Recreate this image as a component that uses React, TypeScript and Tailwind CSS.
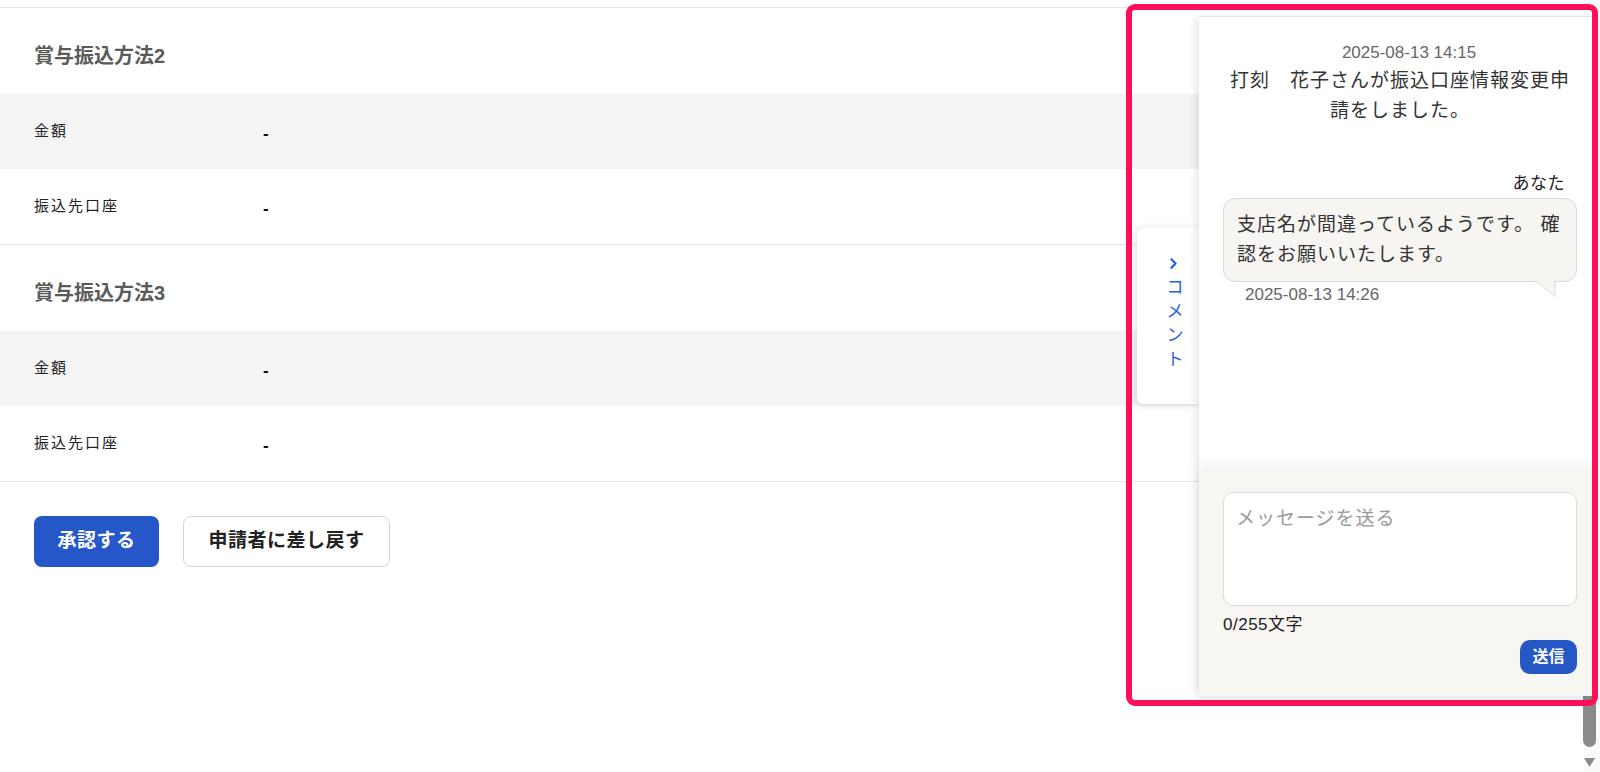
import React from 'react';
import { ChevronRight } from 'lucide-react';

const FONT = { fontFamily: '"Liberation Sans", "Noto Sans CJK JP", sans-serif' };

const Row: React.FC<{ label: string; gray?: boolean }> = ({ label, gray }) => (
  <div className={`flex items-center h-[75px] pl-[34px] ${gray ? 'bg-[#f5f4f4]' : 'bg-white'}`}>
    <div className="w-[229px] text-[15px] tracking-[2px] text-[#222]">{label}</div>
    <div className="text-[17px] font-bold text-[#111] mt-[4px]">-</div>
  </div>
);

const Section: React.FC<{ title: string }> = ({ title }) => (
  <section className="border-b border-[#e6e6e6]">
    <h3 className="pl-[34px] pt-[36px] pb-[26px] text-[20px] leading-[24px] font-bold text-[#5a5a5a]">
      {title}
    </h3>
    <Row label="金額" gray />
    <Row label="振込先口座" />
  </section>
);

const CommentPanel: React.FC = () => (
  <>
    {/* collapse tab */}
    <div className="absolute left-[1137px] top-[228px] w-[62px] h-[176px] bg-white rounded-l-[6px] shadow-[-2px_1px_8px_rgba(0,0,0,0.12)] flex flex-col items-center pt-[27px] text-[#1f5fe8]">
      <ChevronRight size={17} strokeWidth={3} className="ml-[10px]" />
      <div className="flex flex-col items-center mt-[4px] text-[17px] leading-[24px] ml-[14px]">
        {'コメント'.split('').map((c, i) => (
          <span key={i}>{c}</span>
        ))}
      </div>
    </div>

    <aside className="absolute left-[1199px] top-[16px] w-[393px] h-[680px] bg-white border-t border-[#e4e4e4] shadow-[-3px_2px_8px_rgba(0,0,0,0.10)] flex flex-col">
      <div className="flex-1 pl-[24px] pr-[15px] pt-[25px]">
        <p className="text-center text-[17px] leading-[22px] text-[#666] pl-[18px]">2025-08-13 14:15</p>
        <p className="mt-[2px] text-center text-[19px] leading-[30px] tracking-[1px] text-[#333]">
          打刻　花子さんが振込口座情報変更申請をしました。
        </p>

        <p className="mt-[46px] pr-[12px] text-right text-[17px] leading-[24px] tracking-[0.5px] text-[#222]">あなた</p>
        <div className="relative mt-[2px] rounded-[12px] border border-[#dedbd4] bg-[#f6f5f1] pl-[13px] pr-[10px] py-[11px] text-[19px] leading-[30px] tracking-[1px] text-[#333]">
          支店名が間違っているようです。 確認をお願いいたします。
          <svg className="absolute right-[20px] -bottom-[17px]" width="21" height="18" viewBox="0 0 21 18">
            <polygon points="0,0 20,16 20,0" fill="#f6f5f1" />
            <polyline points="0.5,0.6 20,16.5 20,0" fill="none" stroke="#dedbd4" strokeWidth="1" />
          </svg>
        </div>
        <p className="mt-[1px] pl-[22px] text-[17px] leading-[24px] text-[#666]">2025-08-13 14:26</p>
      </div>

      <div className="h-[228px] bg-[#f7f6f3] pl-[24px] pr-[15px] pt-[24px] shadow-[0_-5px_12px_rgba(0,0,0,0.05)]">
        <div className="h-[114px] rounded-[10px] border border-[#dcdcdc] bg-white px-[12px] pt-[13px] text-[19px] leading-[26px] tracking-[1px] text-[#9a9a9a]">
          メッセージを送る
        </div>
        <p className="mt-[8px] text-[17px] leading-[22px] tracking-[0.5px] text-[#222]">0/255文字</p>
        <div className="mt-[4px] flex justify-end">
          <button className="w-[57px] h-[34px] rounded-[10px] bg-[#2557c5] text-white text-[16px] font-bold">
            送信
          </button>
        </div>
      </div>
    </aside>
  </>
);

export default function App() {
  return (
    <div style={FONT} className="relative flex h-[772px] w-full overflow-hidden bg-white">
      <main className="flex-1">
        <div className="h-[8px] border-b border-[#e6e6e6]" />
        <Section title="賞与振込方法2" />
        <Section title="賞与振込方法3" />
        <div className="flex gap-[24px] pl-[34px] pt-[34px]">
          <button className="w-[125px] h-[51px] rounded-[8px] bg-[#2657c8] text-white text-[19px] font-bold tracking-[0.5px]">
            承認する
          </button>
          <button className="w-[207px] h-[51px] rounded-[8px] border border-[#d6d6d6] bg-white text-[#222] text-[19px] font-bold tracking-[0.5px]">
            申請者に差し戻す
          </button>
        </div>
      </main>

      {/* scrollbar */}
      <div className="w-[16px] bg-[#fafafa] flex flex-col justify-end items-start pb-[5px]">
        <div className="w-[13px] -ml-[1px] h-[440px] rounded-full bg-[#8a8a8a]" />
        <svg className="mt-[11px] -ml-[1px]" width="13" height="9" viewBox="0 0 13 9">
          <polygon points="1,0 12,0 6.5,9" fill="#8a8a8a" />
        </svg>
      </div>

      <CommentPanel />

      {/* highlight frame */}
      <div className="pointer-events-none absolute left-[1126px] top-[4px] w-[472px] h-[702px] rounded-[9px] border-[6px] border-[#ff0f57]" />
    </div>
  );
}
